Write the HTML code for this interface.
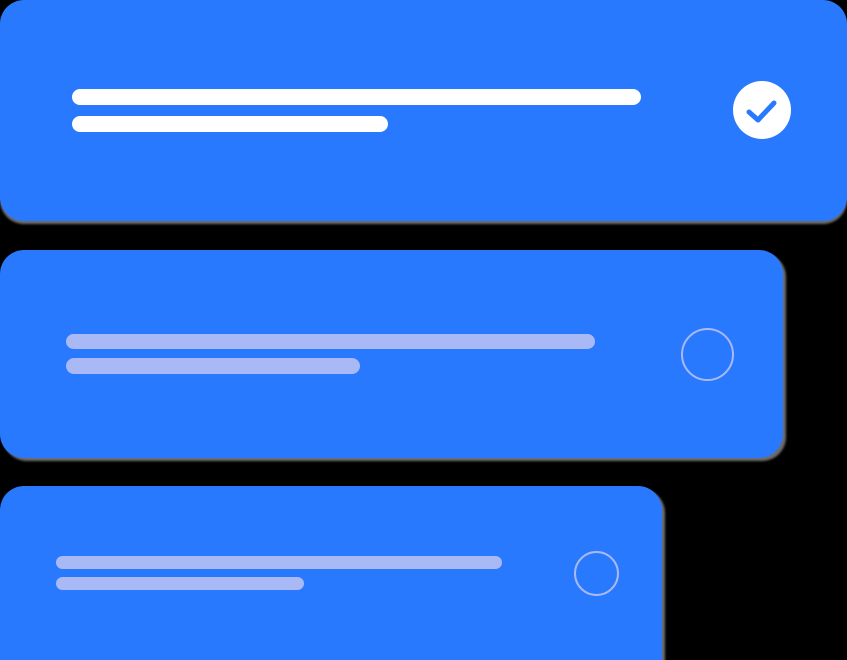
<!DOCTYPE html>
<html><head><style>
html,body{margin:0;padding:0;background:#000;width:847px;height:660px;overflow:hidden;position:relative}
.c{position:absolute;left:0;background:#2979ff;border-radius:24px;box-shadow:3px 3px 2px rgba(128,128,128,.85)}
.l{position:absolute;border-radius:8px}
.w{background:#fff}.p{background:#a9b9f6}
.o{position:absolute;border:2.5px solid #a9b9f6;border-radius:50%;box-sizing:border-box}
</style></head><body>
<div class="c" style="top:0;width:847px;height:221px;box-shadow:0 3px 2px rgba(128,128,128,.85)"></div>
<div class="l w" style="left:72px;top:89px;width:569px;height:16px"></div>
<div class="l w" style="left:72px;top:116px;width:316px;height:16px"></div>
<svg style="position:absolute;left:733px;top:81px" width="58" height="58" viewBox="0 0 58 58"><circle cx="29" cy="29" r="29" fill="#fff"/><path d="M16 31 L25 39 L41 22" fill="none" stroke="#2979ff" stroke-width="5" stroke-linecap="round" stroke-linejoin="round"/></svg>
<div class="c" style="top:250px;width:783px;height:208px"></div>
<div class="l p" style="left:66px;top:334px;width:529px;height:15px"></div>
<div class="l p" style="left:66px;top:358px;width:294px;height:16px"></div>
<div class="o" style="left:681px;top:328px;width:53px;height:53px"></div>
<div class="c" style="top:486px;width:662px;height:200px"></div>
<div class="l p" style="left:56px;top:556px;width:446px;height:13px"></div>
<div class="l p" style="left:56px;top:577px;width:248px;height:13px"></div>
<div class="o" style="left:574px;top:551px;width:45px;height:45px"></div>
</body></html>
